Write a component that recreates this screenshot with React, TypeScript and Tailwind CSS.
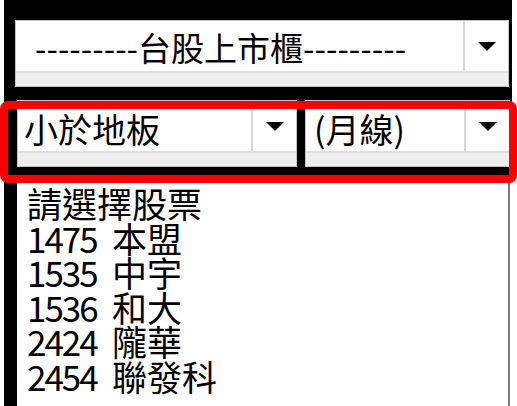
import React from 'react';

const stocks = [
  { code: '1475', name: '本盟' },
  { code: '1535', name: '中宇' },
  { code: '1536', name: '和大' },
  { code: '2424', name: '隴華' },
  { code: '2454', name: '聯發科' },
];

function Arrow() {
  return (
    <svg width="18" height="9" viewBox="0 0 18 9">
      <path d="M0 0H18L9 9Z" fill="#000" />
    </svg>
  );
}

interface ComboProps {
  label: string;
  className: string;
  textClass: string;
}

function Combo({ label, className, textClass }: ComboProps) {
  return (
    <div className={`flex flex-col h-[67px] bg-white border border-[#c4c4c4] ${className}`}>
      <div className="flex flex-1 min-h-0">
        <div className={`flex-1 flex items-center whitespace-pre text-black pt-[4px] ${textClass}`}>{label}</div>
        <div className="w-[45px] border-l-2 border-[#d6d6d6] flex items-center justify-center">
          <Arrow />
        </div>
      </div>
      {/* grey strip under the box */}
      <div className="h-[15px] bg-[#efefef] border-t-2 border-[#dedede]" />
    </div>
  );
}

export default function App() {
  return (
    <div className="relative w-[517px] h-[406px] bg-white overflow-hidden font-['Noto_Sans_CJK_TC','Noto_Sans',sans-serif]">
      <div className="ml-[4px] w-[508px] bg-black pt-[20px] pb-[10px]">
        <Combo
          label="---------台股上市櫃---------"
          className="ml-[11px] w-[494px]"
          textClass="pl-[19px] text-[33px]"
        />
        <div className="mt-[13px] flex gap-[8px] pl-[13px]">
          <Combo label="小於地板" className="w-[280px]" textClass="pl-[6px] text-[34px]" />
          <Combo label="(月線)" className="w-[205px]" textClass="pl-[8px] text-[34px]" />
        </div>
      </div>

      <div className="flex ml-[4px] h-[229px]">
        <div className="w-[13px] bg-black" />
        <div className="w-[493px] bg-white border-r-2 border-[#7a7a7a] pl-[10px] pt-[9px] text-[35px] leading-[34.5px] text-black">
          <div className="h-[34.5px]">請選擇股票</div>
          {stocks.map((s) => (
            <div key={s.code} className="flex h-[34.5px]">
              <span className="tracking-[-2px] w-[85px]">{s.code}</span>
              <span>{s.name}</span>
            </div>
          ))}
        </div>
      </div>

      {/* red highlight frame */}
      <div className="absolute left-0 top-[101px] w-[517px] h-[82px] border-[8px] border-[#ff0000] rounded-[8px]" />
    </div>
  );
}
